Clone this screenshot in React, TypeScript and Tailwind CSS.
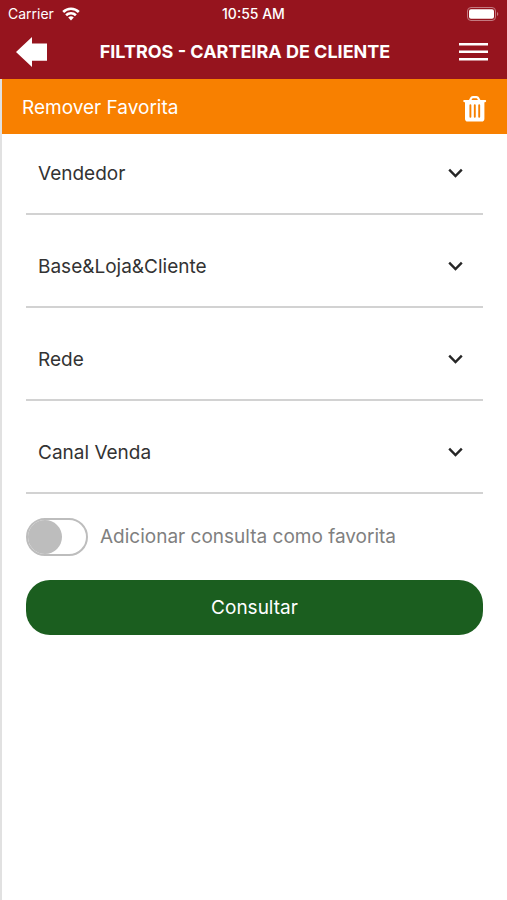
import { useState } from "react";

const filters = [
  { id: "vendedor", label: "Vendedor" },
  { id: "base", label: "Base&Loja&Cliente" },
  { id: "rede", label: "Rede" },
  { id: "canal", label: "Canal Venda" },
];

function WifiIcon() {
  return (
    <svg width="18" height="14" viewBox="0 0 18 14" fill="none" stroke="#fff" strokeWidth="2.6" aria-hidden="true">
      <path d="M1.2 5a11 11 0 0 1 15.600 0" />
      <path d="M4.100 8.300a7 7 0 0 1 9.800 0" />
      <path d="M9 13.400 6.200 10.500a4 4 0 0 1 5.600 0Z" fill="#fff" stroke="none" />
    </svg>
  );
}

function BatteryIcon() {
  return (
    <svg width="32" height="14" viewBox="0 0 32 14" aria-hidden="true">
      <rect x="0.5" y="0.5" width="28" height="13" rx="3.5" fill="none" stroke="#c47a80" />
      <rect x="2" y="2.200" width="25" height="9.600" rx="2" fill="#fff" />
      <path d="M30 5v4a2.200 2.200 0 0 0 0-4Z" fill="#c47a80" />
    </svg>
  );
}

function TrashIcon() {
  return (
    <svg width="24" height="26" viewBox="0 0 24 26" fill="none" aria-hidden="true">
      <path d="M7 4.500 8 2.500Q8.600 1.200 10 1.200h3.400q1.400 0 2 1.300l1 2" stroke="#fff" strokeWidth="2.200" />
      <path d="M1.300 4h20.800q1.100 0 1.100 1.100t-1.100 1.100h-.7V22.800q0 2.800-2.800 2.800H4.800Q2 25.600 2 22.800V6.200h-.7Q.2 6.200.2 5.100T1.300 4Z" fill="#fff" />
      <path d="M7.400 9.200v11.600M11.800 9.200v11.600M16.200 9.200v11.600" stroke="#f88000" strokeWidth="1.900" strokeLinecap="round" />
    </svg>
  );
}

export default function App() {
  const [favorite, setFavorite] = useState(false);

  return (
    <div className="flex min-h-screen flex-col bg-white font-['Inter','Liberation_Sans',sans-serif]">
      <header className="bg-[#96141e] text-white">
        <div className="grid h-7 grid-cols-3 items-center px-2 text-sm">
          <div className="flex items-center gap-2">
            <span>Carrier</span>
            <WifiIcon />
          </div>
          <span className="text-center font-medium">10:55 AM</span>
          <div className="flex justify-end">
            <BatteryIcon />
          </div>
        </div>
        <div className="flex h-[51px] items-center pr-[19px] pb-1 pl-4">
          <button type="button" aria-label="Voltar">
            <svg width="31" height="30" viewBox="0 0 31 30" fill="#fff" aria-hidden="true">
              <path d="M0 15 16 0v6.500h15v17.300H16V30Z" />
            </svg>
          </button>
          <h1 className="flex-1 pr-4 text-center text-lg font-bold whitespace-nowrap">FILTROS - CARTEIRA DE CLIENTE</h1>
          <button type="button" aria-label="Menu">
            <svg width="29" height="18" viewBox="0 0 29 18" fill="#fff" aria-hidden="true">
              <path d="M0 0h29v2.500H0ZM0 7.500h29V10H0ZM0 15h29v2.500H0Z" />
            </svg>
          </button>
        </div>
      </header>

      <main className="flex-1 border-l-2 border-[#e1e1e1]">
        <div className="flex h-[55px] items-center justify-between bg-[#f88000] px-5 pt-1 text-white">
          <span className="text-[19px]">Remover Favorita</span>
          <button type="button" aria-label="Remover Favorita">
            <TrashIcon />
          </button>
        </div>

        <form className="px-6" onSubmit={(e) => e.preventDefault()}>
          <div className="flex flex-col gap-3">
            {filters.map(({ id, label }) => (
              <div key={id} className="grid h-[81px] items-center border-b-2 border-[#d2d2d2]">
                <select
                  id={id}
                  aria-label={label}
                  className="col-start-1 row-start-1 h-full w-full appearance-none bg-transparent px-3 pt-0.5 text-[19px] text-[#333333]"
                >
                  <option>{label}</option>
                </select>
                <svg
                  className="pointer-events-none col-start-1 row-start-1 mr-5 justify-self-end"
                  width="15"
                  height="12"
                  viewBox="0 0 15 12"
                  fill="none"
                  stroke="#262626"
                  strokeWidth="2.400"
                  aria-hidden="true"
                >
                  <path d="m1.200 1.700 6.300 6.300 6.300-6.300" />
                </svg>
              </div>
            ))}
          </div>

          <label className="mt-6 flex items-center gap-3 text-[19px] text-[#808080]">
            <input
              type="checkbox"
              role="switch"
              checked={favorite}
              onChange={(e) => setFavorite(e.target.checked)}
              className="h-[38px] w-[62px] shrink-0 appearance-none rounded-full border-2 border-[#bdbdbd] before:block before:size-[34px] before:rounded-full before:bg-[#bdbdbd] checked:before:ml-auto"
            />
            <span>Adicionar consulta como favorita</span>
          </label>

          <button type="submit" className="mt-6 h-[55px] w-full rounded-3xl bg-[#1b5e1f] pt-0.5 text-[19px] text-white">
            Consultar
          </button>
        </form>
      </main>
    </div>
  );
}
